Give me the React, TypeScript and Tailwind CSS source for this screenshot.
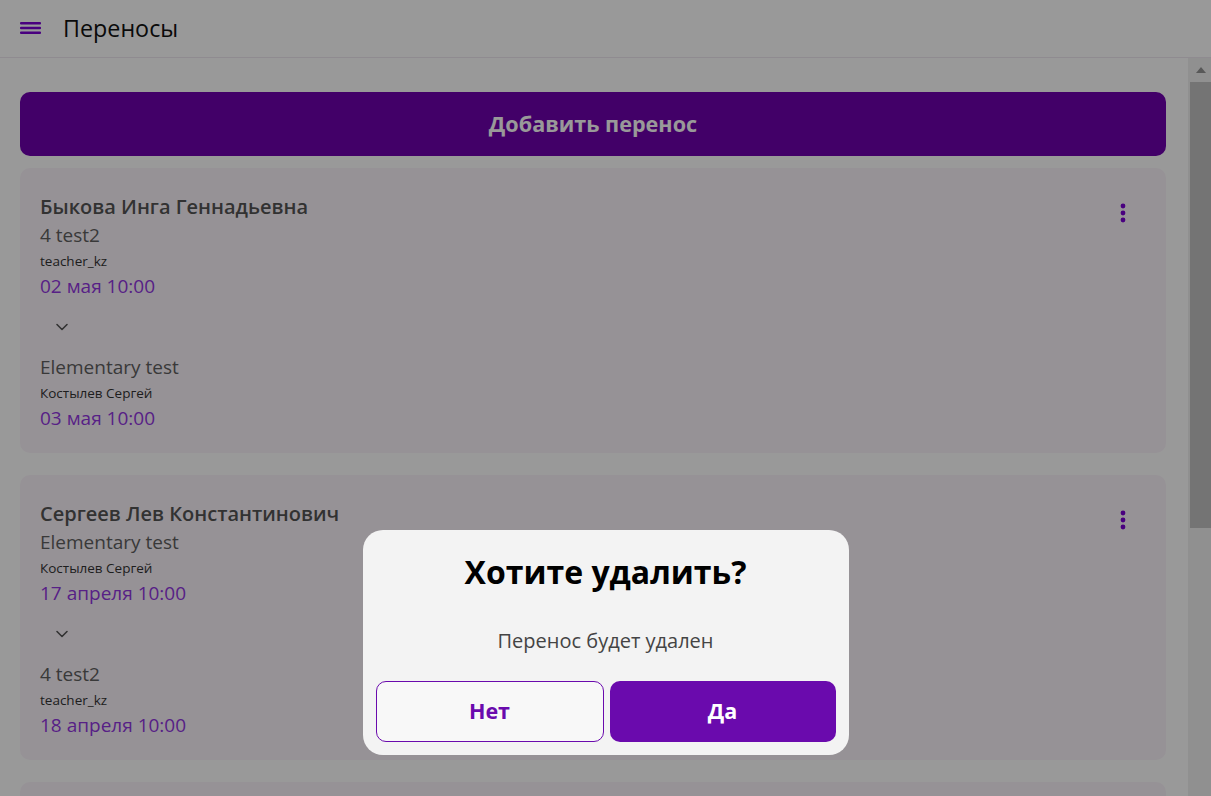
import React from 'react';

type Lesson = { title: string; teacher: string; date: string };
type Transfer = { student: string; from: Lesson; to: Lesson };

const transfers: Transfer[] = [
  {
    student: 'Быкова Инга Геннадьевна',
    from: { title: '4 test2', teacher: 'teacher_kz', date: '02 мая 10:00' },
    to: { title: 'Elementary test', teacher: 'Костылев Сергей', date: '03 мая 10:00' },
  },
  {
    student: 'Сергеев Лев Константинович',
    from: { title: 'Elementary test', teacher: 'Костылев Сергей', date: '17 апреля 10:00' },
    to: { title: '4 test2', teacher: 'teacher_kz', date: '18 апреля 10:00' },
  },
  {
    student: 'Иванова Мария Петровна',
    from: { title: '4 test2', teacher: 'teacher_kz', date: '20 апреля 10:00' },
    to: { title: 'Elementary test', teacher: 'Костылев Сергей', date: '21 апреля 10:00' },
  },
];

function LessonInfo({ lesson }: { lesson: Lesson }) {
  return (
    <div>
      <div className="text-[19px] leading-[29px] text-[#606060]">{lesson.title}</div>
      <div className="text-[13.5px] leading-[22px] text-[#333333]">{lesson.teacher}</div>
      <div className="text-[19px] leading-[28px] text-[#9236e0]">{lesson.date}</div>
    </div>
  );
}

function TransferCard({ item }: { item: Transfer }) {
  return (
    <div className="flex items-start justify-between rounded-[10px] bg-[#fbf4fb] px-5 pt-[25px] pb-[21px]">
      <div>
        <div className="text-[20px] leading-[28px] font-semibold text-[#545454]">{item.student}</div>
        <LessonInfo lesson={item.from} />
        <div className="flex h-[53px] items-center">
          <svg width="24" height="24" viewBox="0 0 24 24" className="ml-[10px]">
            <path d="M7 9.5 L12 14.5 L17 9.5" fill="none" stroke="#555555" strokeWidth="1.6" strokeLinecap="round" strokeLinejoin="round" />
          </svg>
        </div>
        <LessonInfo lesson={item.to} />
      </div>
      <button className="mr-[3px] flex h-10 w-10 items-center justify-center">
        <svg width="6" height="20" viewBox="0 0 6 20">
          <circle cx="3" cy="3" r="2.4" fill="#7a00d4" />
          <circle cx="3" cy="10" r="2.4" fill="#7a00d4" />
          <circle cx="3" cy="17" r="2.4" fill="#7a00d4" />
        </svg>
      </button>
    </div>
  );
}

export default function App() {
  return (
    <div className="flex h-screen flex-col overflow-hidden bg-white font-['Open_Sans',sans-serif]">
      {/* header */}
      <header className="flex h-[58px] shrink-0 items-center border-b border-[#eee8f0] pl-5">
        <svg width="21" height="12" viewBox="0 0 21 12" className="mb-[2px]">
          <rect x="0" y="0" width="21" height="2.4" rx="1" fill="#7a00d4" />
          <rect x="0" y="4.8" width="21" height="2.4" rx="1" fill="#7a00d4" />
          <rect x="0" y="9.6" width="21" height="2.4" rx="1" fill="#7a00d4" />
        </svg>
        <h1 className="ml-[22px] text-[23.3px] leading-none text-[#111111]">Переносы</h1>
      </header>

      <div className="flex min-h-0 flex-1">
        {/* content */}
        <main className="flex-1 overflow-hidden pl-5 pr-[22px] pt-[34px]">
          <button className="h-16 w-full rounded-[10px] bg-[#6e00ad] text-[21.6px] font-bold text-white">
            Добавить перенос
          </button>
          <div className="mt-3 flex flex-col gap-[22px]">
            {transfers.map((t) => (
              <TransferCard key={t.student} item={t} />
            ))}
          </div>
        </main>

        {/* scrollbar */}
        <div className="flex w-[23px] shrink-0 flex-col bg-[#f1f1f1]">
          <div className="flex h-6 items-center justify-center">
            <svg width="10" height="6" viewBox="0 0 10 6" className="ml-[2px]">
              <path d="M0 6 L5 0 L10 6 Z" fill="#939393" />
            </svg>
          </div>
          <div className="ml-[2px] h-[446px] bg-[#c1c1c1]" />
        </div>
      </div>

      {/* dialog */}
      <div className="fixed inset-0 flex items-end justify-center bg-black/40 pb-[41px]">
        <div className="w-[486px] rounded-[20px] bg-[#f3f3f3] px-[13px] pt-[21px] pb-[13px] text-center">
          <h2 className="text-[32px] font-bold leading-[41px] text-black">Хотите удалить?</h2>
          <p className="mt-[37px] text-[20px] leading-[24px] text-[#444444]">Перенос будет удален</p>
          <div className="mt-[28px] flex gap-[6px]">
            <button className="h-[61px] flex-1 rounded-[10px] border border-[#6a0aad] bg-[#f8f8f8] text-[21.5px] font-bold text-[#6a0aad]">
              Нет
            </button>
            <button className="h-[61px] flex-1 rounded-[10px] bg-[#6a0aad] text-[21.5px] font-bold text-white">
              Да
            </button>
          </div>
        </div>
      </div>
    </div>
  );
}
